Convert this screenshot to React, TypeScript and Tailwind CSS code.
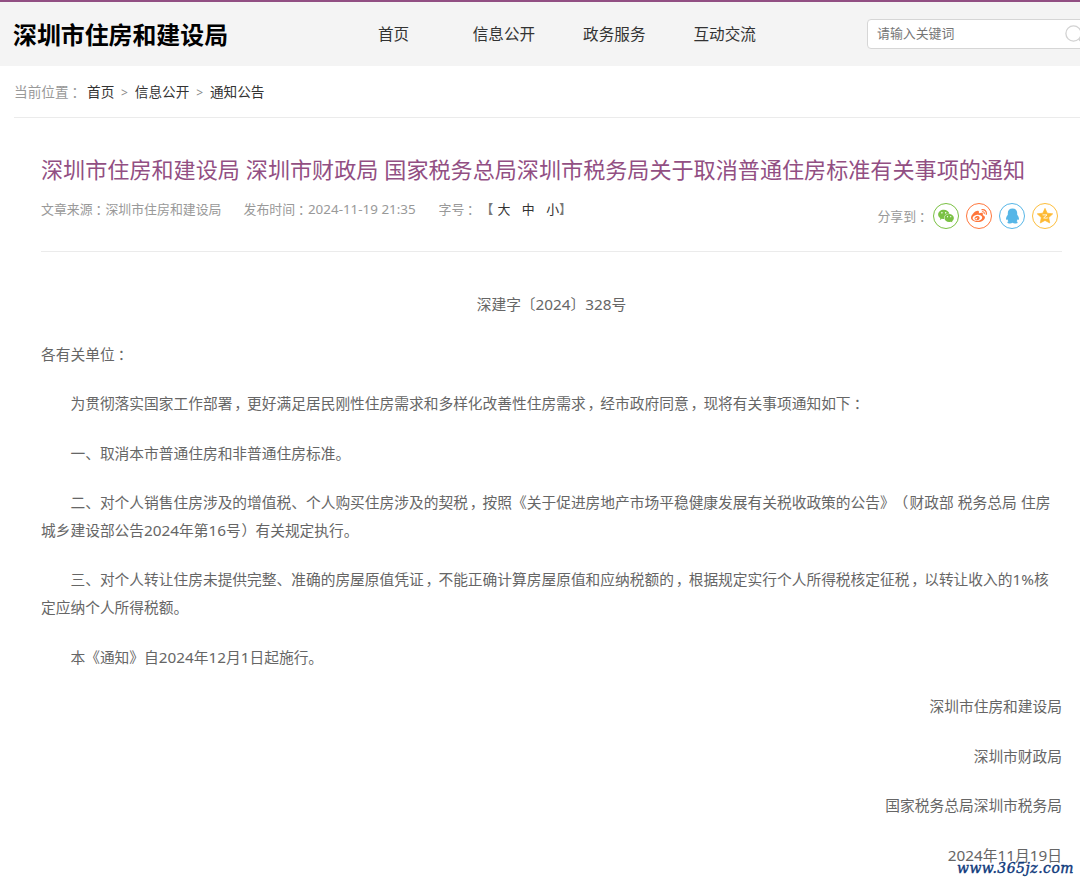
import { ReactNode } from "react";
import { FaWeibo } from "react-icons/fa";
import { AiFillWechat } from "react-icons/ai";

const PUNCTUATION: Record<string, string> = {
  "：": "inline-block w-[1em] indent-[0.22em]",
  "，": "inline-block w-[1em] indent-[0.12em]",
  "（": "inline-block w-[1em] indent-[-0.08em]",
  "）": "inline-block w-[1em] indent-[0.06em]",
};

function T({ children }: { children: string }) {
  return (
    <>
      {children.split(/([：，（）]|[0-9][0-9:\-% ]*)/).map((part, i) => {
        if (PUNCTUATION[part]) {
          return (
            <span key={i} className={PUNCTUATION[part]}>
              {part}
            </span>
          );
        }
        if (/^[0-9]/.test(part)) {
          return (
            <span key={i} className="text-[1.04em] leading-none">
              {part}
            </span>
          );
        }
        return part;
      })}
    </>
  );
}

function P({ lines, className = "" }: { lines: string[]; className?: string }) {
  return (
    <p className={`whitespace-nowrap ${className}`}>
      {lines.map((l, i) => (
        <span key={i} className="block h-[27.5px]">
          <T>{l}</T>
        </span>
      ))}
    </p>
  );
}

function Circle({ className, children }: { className: string; children: ReactNode }) {
  return (
    <a className={`flex size-[26px] items-center justify-center rounded-full border ${className}`}>{children}</a>
  );
}

const INDENTED = "[&>span:first-child]:pl-[2em]";

export default function App() {
  return (
    <div className="relative h-[883px] w-[1080px] overflow-hidden bg-white font-['Noto_Sans','Noto_Sans_CJK_SC',sans-serif] text-[#666] [text-spacing-trim:space-all]">
      <header className="flex h-[66px] items-center border-t-2 border-[#924f83] bg-[#f4f4f4] pl-[13px] whitespace-nowrap">
        <h1 className="w-[365px] pt-px text-[23.9px] leading-[30px] font-bold text-black">深圳市住房和建设局</h1>
        <nav className="flex w-[489px] text-[15.6px] leading-6 text-[#333]">
          <a className="mr-[63.5px]">首页</a>
          <a className="mr-12">信息公开</a>
          <a className="mr-12">政务服务</a>
          <a>互动交流</a>
        </nav>
        <div className="-mr-5 flex h-[30px] flex-1 items-center rounded-[4px] border border-[#d6d6d6] bg-white pl-[9px]">
          <span className="w-[188px] text-[12.9px] text-[#757575]">请输入关键词</span>
          <svg className="size-5 shrink-0" viewBox="0 0 20 20" fill="none" stroke="#d2d2d2" strokeWidth="1.3">
            <circle cx="8.5" cy="9.5" r="7.6" />
            <path d="M14 15l5 5" strokeWidth="2" />
          </svg>
        </div>
      </header>

      <div className="ml-[14px] flex h-[52px] items-center border-b border-[#ebebeb] pt-px text-[13.65px] whitespace-nowrap text-[#333]">
        <span className="w-[73px] text-[#999]"><T>当前位置：</T></span>
        <a>首页</a>
        <span className="w-[20.5px] pt-px text-center text-xs text-[#888]">&gt;</span>
        <a>信息公开</a>
        <span className="w-[20.5px] pt-px text-center text-xs text-[#888]">&gt;</span>
        <a>通知公告</a>
      </div>

      <main className="ml-[41px] w-[1021px]">
        <h2 className="pt-[35px] text-[22.1px] leading-8 [word-spacing:0.2px] whitespace-nowrap text-[#924f83]">
          深圳市住房和建设局 深圳市财政局 国家税务总局深圳市税务局关于取消普通住房标准有关事项的通知
        </h2>
        <div className="flex h-[67px] border-b border-[#ebebeb] text-[12.9px] leading-[20px] whitespace-nowrap text-[#999]">
          <span className="mt-[14px] w-[202.5px]"><T>文章来源：深圳市住房和建设局</T></span>
          <span className="mt-[14px] w-[195px]"><T>发布时间：2024-11-19 21:35</T></span>
          <span className="mt-[14px] w-[42px]"><T>字号：</T></span>
          <span className="mt-[14px] flex text-[#333]">
            <span className="text-[#777]">【</span>
            <a className="mr-[11.5px] ml-[4px]">大</a>
            <a className="mr-[11.5px]">中</a>
            <a>小</a>
            <span className="text-[#777]">】</span>
          </span>
          <div className="mt-[18px] mr-[4px] ml-auto flex h-[26px] items-center gap-[7px]">
            <span className="mr-[-3px]"><T>分享到：</T></span>
            <Circle className="border-[#7ac143] text-[#7ac143]"><AiFillWechat size={18} /></Circle>
            <Circle className="border-[#ff763b] text-[#ff763b]"><FaWeibo size={16} /></Circle>
            <Circle className="border-[#56b6e7] text-[#56b6e7]">
              <svg width="15" height="16" viewBox="0 0 14 16" fill="currentColor">
                <path d="M7 .6C4 .6 2.300 2.600 2.300 5.200v1.500C1.300 8 .5 9.600.5 11c0 .9.6 1 1.300.2.2.8.6 1.500 1.100 2-.7.3-1 .7-1 1.200 0 .8 1.100 1.100 2.600 1.100 1 0 1.900-.2 2.500-.7.6.5 1.500.7 2.500.7 1.500 0 2.600-.3 2.600-1.100 0-.5-.3-.9-1-1.200.5-.5.9-1.200 1.100-2 .7.8 1.300.7 1.300-.2 0-1.400-.8-3-1.800-4.300V5.200C11.700 2.600 10 .6 7 .6z" />
              </svg>
            </Circle>
            <Circle className="border-[#fdbe3d] text-[#fdb933]">
              <svg width="18" height="18" viewBox="0 0 16 16" fill="currentColor" className="shrink-0">
                <path d="M8 1.200l2 4.300 4.900.6-3.600 3.300.9 4.800L8 11.900l-4.200 2.300.9-4.800L1.100 6.100 6 5.500z" stroke="currentColor" strokeWidth=".6" strokeLinejoin="round" />
                <path d="M5.800 7h4L6.800 9.700c1.300.3 2.500.3 3.700 0" fill="none" stroke="#fff" strokeWidth=".75" />
              </svg>
            </Circle>
          </div>
        </div>

        <article className="flex flex-col gap-[22.1px] pt-[39px] text-[14.72px] leading-[27.5px]">
          <P className="text-center" lines={["深建字〔2024〕328号"]} />
          <P lines={["各有关单位："]} />
          <P className={INDENTED} lines={["为贯彻落实国家工作部署，更好满足居民刚性住房需求和多样化改善性住房需求，经市政府同意，现将有关事项通知如下："]} />
          <P className={INDENTED} lines={["一、取消本市普通住房和非普通住房标准。"]} />
          <P
            className={`${INDENTED} [word-spacing:0.4px]`}
            lines={[
              "二、对个人销售住房涉及的增值税、个人购买住房涉及的契税，按照《关于促进房地产市场平稳健康发展有关税收政策的公告》（财政部 税务总局 住房",
              "城乡建设部公告2024年第16号）有关规定执行。",
            ]}
          />
          <P
            className={INDENTED}
            lines={[
              "三、对个人转让住房未提供完整、准确的房屋原值凭证，不能正确计算房屋原值和应纳税额的，根据规定实行个人所得税核定征税，以转让收入的1%核",
              "定应纳个人所得税额。",
            ]}
          />
          <P className={INDENTED} lines={["本《通知》自2024年12月1日起施行。"]} />
          <P className="text-right" lines={["深圳市住房和建设局"]} />
          <P className="text-right" lines={["深圳市财政局"]} />
          <P className="text-right" lines={["国家税务总局深圳市税务局"]} />
          <P className="text-right" lines={["2024年11月19日"]} />
        </article>
      </main>
      <div className="absolute right-[6px] bottom-[5px] font-['DejaVu_Serif_Condensed','DejaVu_Serif',serif] text-[15.5px] leading-5 tracking-[0.5px] text-[#0f3a7c] italic [-webkit-text-stroke:0.4px_#0f3a7c] [text-shadow:0_0_1px_white,1px_1px_0_white]">
        www.365jz.com
      </div>
    </div>
  );
}
